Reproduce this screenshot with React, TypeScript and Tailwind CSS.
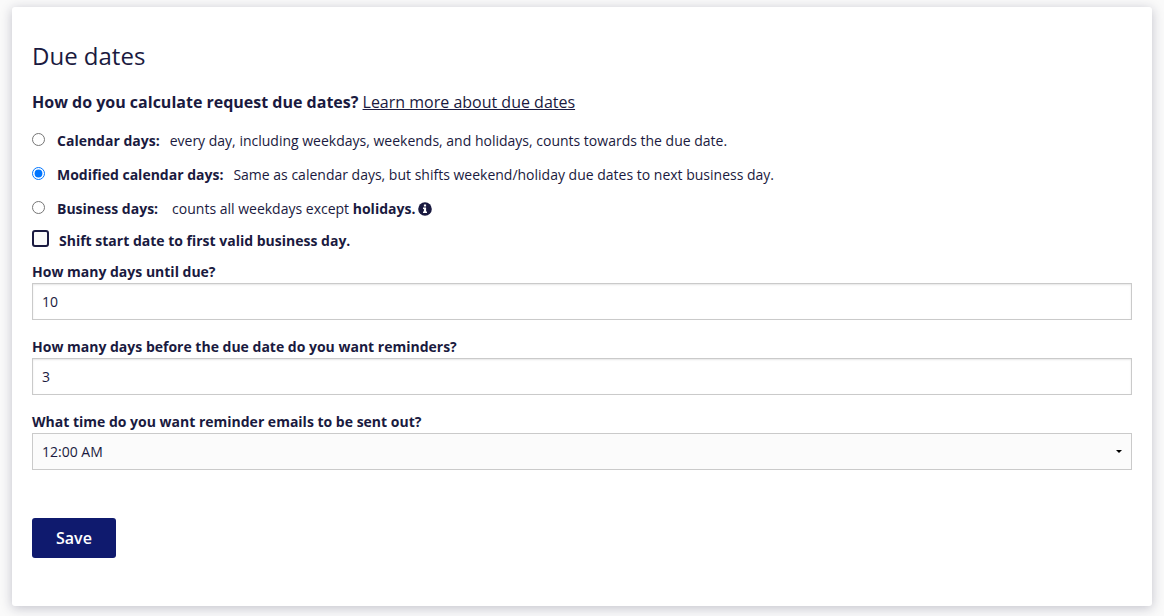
import { useState } from "react";

const METHODS = [
  {
    id: "calendar",
    label: "Calendar days:",
    text: <>every day, including weekdays, weekends, and holidays, counts towards the due date.</>,
    gap: "gap-[10px]",
  },
  {
    id: "modified",
    label: "Modified calendar days:",
    text: <>Same as calendar days, but shifts weekend/holiday due dates to next business day.</>,
    gap: "gap-[10px]",
  },
  {
    id: "business",
    label: "Business days:",
    text: (
      <>
        counts all weekdays except <strong className="font-bold">holidays.</strong>
        <InfoIcon />
      </>
    ),
    gap: "gap-[14px]",
  },
];

function InfoIcon() {
  return (
    <svg viewBox="0 0 14 14" className="ml-[3px] inline size-[14px] align-[-2px]" aria-hidden="true">
      <circle cx="7" cy="7" r="6.8" fill="#1a1a40" />
      <path
        fill="#fff"
        d="M5.9 2.6h2.2v1.9H5.9zM5 5.5h3.1v4.1H9v1.5H5V9.6h.9V7H5z"
      />
    </svg>
  );
}

function TextField({ id, label, value, onChange }: { id: string; label: string; value: string; onChange: (v: string) => void }) {
  return (
    <div className="mb-4">
      <label htmlFor={id} className="mb-px block font-bold">
        {label}
      </label>
      <input
        id={id}
        type="text"
        value={value}
        onChange={(e) => onChange(e.target.value)}
        className="block h-[37px] w-full border border-[#cacaca] bg-white px-[9px] shadow-[inset_0_1px_2px_rgba(10,10,10,0.1)]"
      />
    </div>
  );
}

export default function App() {
  const [method, setMethod] = useState("modified");
  const [shift, setShift] = useState(false);
  const [days, setDays] = useState("10");
  const [reminder, setReminder] = useState("3");

  return (
    <div className="min-h-screen bg-[#fafafa] px-3 pt-[7px] pb-[10px] font-['Open_Sans',sans-serif] text-sm leading-[21px] text-[#1a1a40]">
      <form
        onSubmit={(e) => e.preventDefault()}
        className="rounded-[3px] bg-white px-5 pt-[31px] pb-12 shadow-[0_2px_12px_rgba(26,26,64,0.25)]"
      >
        <h2 className="mb-4 text-2xl leading-9">Due dates</h2>
        <fieldset>
          <legend className="mb-[9px] text-base leading-6">
            <strong className="font-bold">How do you calculate request due dates?</strong>{" "}
            <a href="#due-dates" className="underline">
              Learn more about due dates
            </a>
          </legend>
          {METHODS.map((m) => (
            <label key={m.id} className="flex h-[34px] items-center">
              <input
                type="radio"
                name="method"
                checked={method === m.id}
                onChange={() => setMethod(m.id)}
                className="mr-3 mb-px size-[13px]"
              />
              <span className={`flex ${m.gap}`}>
                <strong className="font-bold">{m.label}</strong>
                <span>{m.text}</span>
              </span>
            </label>
          ))}
        </fieldset>
        <label className="mb-[5px] flex h-[31px] items-center">
          <input
            type="checkbox"
            checked={shift}
            onChange={(e) => setShift(e.target.checked)}
            className="mr-[10px] mb-[4px] size-[17px] appearance-none rounded-[3px] border-2 border-[#1a1a40] bg-[#fafafa] checked:bg-[#1a1a40]"
          />
          <strong className="font-bold">Shift start date to first valid business day.</strong>
        </label>
        <TextField id="days" label="How many days until due?" value={days} onChange={setDays} />
        <TextField
          id="reminder"
          label="How many days before the due date do you want reminders?"
          value={reminder}
          onChange={setReminder}
        />
        <label htmlFor="time" className="mb-px block font-bold">
          What time do you want reminder emails to be sent out?
        </label>
        <div className="relative">
          <select
            id="time"
            defaultValue="12:00 AM"
            className="block h-[37px] w-full appearance-none border border-[#cacaca] bg-[#fbfbfb] px-[9px]"
          >
            <option>12:00 AM</option>
            <option>6:00 AM</option>
            <option>12:00 PM</option>
            <option>6:00 PM</option>
          </select>
          <svg
            viewBox="0 0 6 3"
            className="pointer-events-none absolute top-[17px] right-[10px] h-[3px] w-[6px]"
            aria-hidden="true"
          >
            <path d="M0 0h6L3 3z" fill="#000" />
          </svg>
        </div>
        <button
          type="submit"
          className="mt-12 h-10 rounded-[3px] bg-[#0f1a6e] px-6 text-base font-semibold text-white"
        >
          Save
        </button>
      </form>
    </div>
  );
}
